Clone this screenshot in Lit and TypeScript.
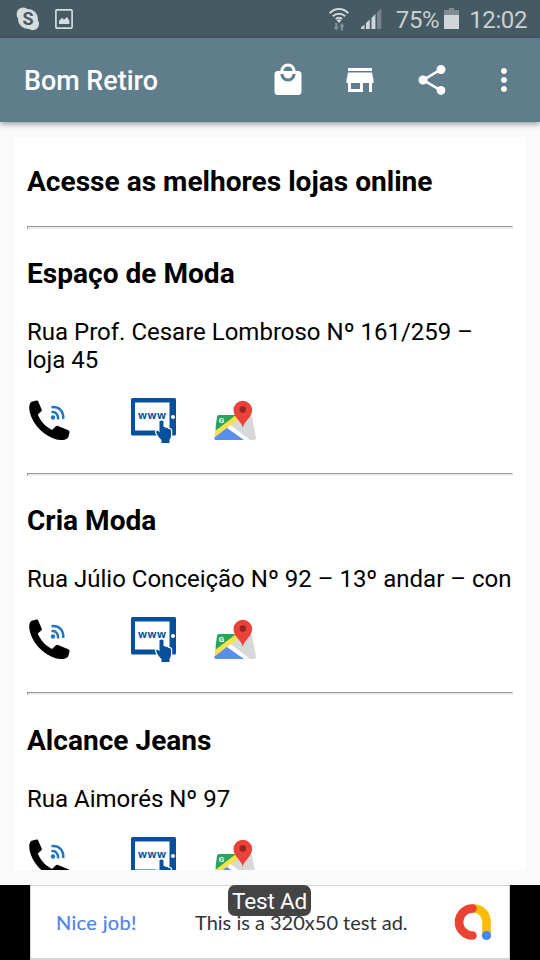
import { LitElement, html, css } from "lit";
import { customElement, property } from "lit/decorators.js";

const icon = (d: string) => html`<svg class="icon" viewBox="0 0 24 24"><path d=${d} /></svg>`;

const MALL = "M19 6h-2c0-2.76-2.24-5-5-5S7 3.24 7 6H5c-1.1 0-1.99.9-1.99 2L3 20c0 1.1.9 2 2 2h14c1.1 0 2-.9 2-2V8c0-1.1-.9-2-2-2zm-7-3c1.66 0 3 1.34 3 3H9c0-1.66 1.34-3 3-3zm0 10c-2.76 0-5-2.24-5-5h2c0 1.66 1.34 3 3 3s3-1.34 3-3h2c0 2.76-2.24 5-5 5z";
const STORE = "M20 4H4v2h16V4zm1 10v-2l-1-5H4l-1 5v2h1v6h10v-6h4v6h2v-6h1zm-9 4H6v-4h6v4z";
const SHARE = "M18 16.08c-.76 0-1.44.3-1.96.77L8.91 12.7c.05-.23.09-.46.09-.7s-.04-.47-.09-.7l7.05-4.11c.54.5 1.25.81 2.04.81 1.66 0 3-1.34 3-3s-1.34-3-3-3-3 1.34-3 3c0 .24.04.47.09.7L8.04 9.81C7.5 9.31 6.79 9 6 9c-1.66 0-3 1.34-3 3s1.34 3 3 3c.79 0 1.5-.31 2.04-.81l7.12 4.16c-.05.21-.08.43-.08.65 0 1.61 1.31 2.92 2.92 2.92s2.92-1.31 2.92-2.92-1.31-2.92-2.92-2.92z";
const MORE = "M12 8c1.1 0 2-.9 2-2s-.9-2-2-2-2 .9-2 2 .9 2 2 2zm0 2c-1.1 0-2 .9-2 2s.9 2 2 2 2-.9 2-2-.9-2-2-2zm0 6c-1.1 0-2 .9-2 2s.9 2 2 2 2-.9 2-2-.9-2-2-2z";

@customElement("status-bar")
export class StatusBar extends LitElement {
  static styles = css`
    :host { display: flex; align-items: center; height: 38px; padding: 0 13px 0 16px; background: #465a64; color: #c9d0d3; font: 24px/38px Roboto, sans-serif; box-sizing: border-box; }
    svg { display: block; flex: none; }
    .skype { margin-right: 15px; }
    .spacer { flex: 1; }
    .wifi { margin: 0 12px 1px 0; }
    .signal { margin: 0 14px 1px 0; }
    .text { padding-top: 2px; white-space: nowrap; letter-spacing: -0.4px; }
    .battery { margin: 0 10px 1px 5px; }
  `;
  render() {
    return html`
      <svg class="skype" width="24" height="24" viewBox="0 0 24 24">
        <circle cx="7.2" cy="7" r="6.6" fill="#d6dbdd" /><circle cx="16.8" cy="17" r="6.2" fill="#d6dbdd" /><circle cx="12" cy="12" r="10" fill="#d6dbdd" />
        <text x="12" y="18.3" text-anchor="middle" font-family="Roboto, sans-serif" font-weight="700" font-size="18" fill="#465a64">S</text>
      </svg>
      <svg width="18" height="20" viewBox="0 0 18 20">
        <rect x=".9" y=".9" width="16.2" height="18.2" rx="1" fill="none" stroke="#d6dbdd" stroke-width="1.7" />
        <path d="M4 15v-3l3-3.2 2 2 3-2.8 2.4 4V15z" fill="#d6dbdd" />
      </svg>
      <div class="spacer"></div>
      <svg class="wifi" width="20" height="24" viewBox="0 0 20 24">
        <g fill="none" stroke="#d0d6d8" stroke-width="2">
          <path d="M.7 6.2C6 .7 14 .7 19.3 6.2M3.8 9.2c3.5-3.4 8.9-3.4 12.4 0M6.8 12.1c1.8-1.7 4.6-1.7 6.4 0" />
        </g>
        <path d="M7.6 13.4L10 12l2.4 1.4L10 16z" fill="#d0d6d8" />
        <path d="M6.2 16h2.200v4h1.400l-2.500 3.600L4.600 20h1.600zM11.800 23.500h2.200v-4h1.500L12.900 15.700 10.400 19.500h1.400z" fill="#81909a" />
      </svg>
      <svg class="signal" width="21" height="21" viewBox="0 0 21 21">
        <path d="M0 21v-1.500L3.500 16.500V21zM5 21v-6l3.800-3.500V21zM10.500 21V10L14.400 6v15z" fill="#d0d6d8" />
        <path d="M16 21V4.500L20.300.5V21z" fill="#77868d" />
      </svg>
      <span class="text">75%</span>
      <svg class="battery" width="15" height="21" viewBox="0 0 15 21">
        <path d="M5 0h5v2h5v5H0V2h5z" fill="#7f8c92" /><path d="M0 7h15v14H0z" fill="#d0d6d8" />
      </svg>
      <span class="text">12:02</span>
    `;
  }
}

@customElement("store-links")
export class StoreLinks extends LitElement {
  static styles = css`
    :host { display: flex; height: 45px; }
    svg { display: block; width: 45px; height: 45px; flex: none; overflow: visible; }
    .web { margin: 0 37px 0 59px; }
  `;
  render() {
    return html`
      <svg viewBox="0 0 45 45">
        <path d="M4.500 3.800L9.600 2.600C10.500 2.500 11 3 11.300 3.700L14.700 11.500C15 12.300 14.800 13 14.200 13.500L10.800 16.500C13.500 23 18.500 28.800 25 31.900L28.900 28.200C29.500 27.600 30.300 27.500 31 27.900L41.300 32.200C42.300 32.700 42.700 33.500 42.500 34.500L41.500 38.500C41 40.200 39.500 41.200 37.500 41.700C32 43 25.500 40.800 20.500 37.600C12.500 32.500 5.500 24.500 3 15C1.800 10 2 5.300 4.500 3.800Z" fill="#000" />
        <g fill="none" stroke="#2175bc" stroke-width="2.500">
          <path d="M24.500 9.200C32 8.300 37 13.500 36.200 21M24.500 14.200C28.800 13.500 31.700 17 31 21.500" />
        </g>
        <circle cx="26" cy="19.500" r="2.200" fill="#2175bc" />
      </svg>
      <svg class="web" viewBox="0 0 45 45">
        <path d="M1.500 0H43.500Q45 0 45 1.500V36Q45 37.500 43.500 37.500H1.500Q0 37.500 0 36V1.500Q0 0 1.500 0Z" fill="#07509a" />
        <path d="M4 4.500H38.500V32.500H4Z" fill="#fff" />
        <circle cx="42" cy="19" r="2" fill="#fff" />
        <path d="M28.500 23.500Q30.500 21.500 32.500 23.500V29Q34 28.600 34.800 30Q36.500 29.400 37.300 30.900Q40 30.600 40 33V38Q39.800 40.300 38.500 41.700V45H30.500V42C28 39.500 26.500 37.500 25.200 34.500C25 32.300 27 32 28.500 34.300Z" fill="#07509a" stroke="#fff" stroke-width="2.400" paint-order="stroke" />
        <text x="7 16.500 26" y="20.800" font-family="Noto Sans, sans-serif" font-size="10.500" font-weight="700" fill="#07509a">www</text>
      </svg>
      <svg viewBox="0 0 45 45">
        <path d="M6 17H37Q38.600 17 39 18.500L43 39.500Q43.300 42 41 42H3Q1 42 1.300 39.800L4 19Q4.400 17 6 17Z" fill="#d8d8d8" />
        <path d="M6 17H26L3 35.500 2.700 29 4 19Q4.400 17 6 17Z" fill="#26a55b" />
        <path d="M23 17H31L14 31 2 40.500 2.800 32.500Z" fill="#fbe04b" />
        <path d="M15 29L33 42H3Q1 42 1.300 39.800Z" fill="#5b8def" />
        <path d="M14 30L17.500 27 37 42H31Z" fill="#fff" />
        <text x="5.700" y="24.500" font-family="Roboto, sans-serif" font-size="8" font-weight="700" fill="#fff">G</text>
        <path d="M29.800 30C29.300 24 20.500 19.500 20.500 12A9.300 9.300 0 0 1 39.100 12C39.100 19.500 30.300 24 29.800 30Z" fill="#ea4238" />
        <circle cx="29.800" cy="11.500" r="3.200" fill="#982522" />
      </svg>
    `;
  }
}

@customElement("store-entry")
export class StoreEntry extends LitElement {
  @property() name = "";
  @property() address = "";
  static styles = css`
    :host { display: block; font-family: Roboto, sans-serif; color: #000; }
    .rule { height: 3px; box-sizing: border-box; border: 1px solid #eee; border-color: #969696 #eee #eee #969696; background: #eee; }
    .name { margin: 28.5px 0 28px; font-size: 28.08px; line-height: 33px; font-weight: 700; white-space: nowrap; }
    .address { margin: 0 0 24px; font-size: 24px; line-height: 28px; }
    store-links { margin-bottom: 29.85px; }
  `;
  render() {
    return html`
      <div class="rule"></div>
      <h3 class="name">${this.name}</h3>
      <p class="address">${this.address}</p>
      <store-links></store-links>
    `;
  }
}

@customElement("test-ad")
export class TestAd extends LitElement {
  static styles = css`
    :host { display: flex; justify-content: center; height: 75px; background: #000; position: relative; }
    .banner { width: 480px; box-sizing: border-box; border: 1px solid #d2d5d7; border-bottom-width: 2px; background: #fff; display: flex; align-items: center; padding: 0 17px 0 25px; font: 20px/24px Lato, sans-serif; white-space: nowrap; }
    .job { width: 139px; color: #4f82ee; letter-spacing: 0.35px; -webkit-text-stroke: 0.2px #4f82ee; }
    .copy { flex: 1; color: #303236; }
    .tag { position: absolute; left: 228px; top: 0; width: 83px; height: 31px; border-radius: 7px; background: #444; color: #fff; font: 22.5px/33px Roboto, sans-serif; letter-spacing: -0.2px; text-align: center; white-space: nowrap; }
  `;
  render() {
    return html`
      <div class="banner">
        <span class="job">Nice job!</span>
        <span class="copy">This is a 320x50 test ad.</span>
        <svg width="38" height="38" viewBox="0 0 38 38" fill="none" stroke-width="8.600" stroke-linecap="round">
          <path d="M19 5.500C27 5.500 32.500 11 32.500 19V32" stroke="#fbbc04" />
          <path d="M18.500 5.500A13.500 13.500 0 0 0 18.500 32.500" stroke="#ea4335" />
          <circle cx="32.500" cy="32.500" r="4.600" fill="#4285f4" />
        </svg>
      </div>
      <div class="tag">Test Ad</div>
    `;
  }
}

@customElement("app-root")
export class AppRoot extends LitElement {
  static styles = css`
    :host { display: flex; flex-direction: column; width: 540px; height: 960px; overflow: hidden; background: #fafafa; font-family: Roboto, sans-serif; }
    .toolbar { height: 84px; flex: none; display: flex; align-items: center; padding-left: 24px; box-sizing: border-box; background: #607d8b; color: #fff; box-shadow: 0 2px 6px rgba(0, 0, 0, .4); }
    .title { flex: 1; padding-top: 2px; font-size: 26.9px; font-weight: 500; white-space: nowrap; }
    .actions { display: flex; gap: 36px; padding-right: 18px; }
    .icon { width: 36px; height: 36px; display: block; fill: #fff; }
    .page { flex: 1; min-height: 0; margin: 15px; padding: 28px 12px 0; background: #fff; overflow: hidden; }
    .intro { margin: 0 0 27.6px; font-size: 28.08px; line-height: 33px; font-weight: 700; white-space: nowrap; }
    status-bar, test-ad { flex: none; }
  `;
  private stores = [
    { name: "Espaço de Moda", address: "Rua Prof. Cesare Lombroso Nº 161/259 – loja 45" },
    { name: "Cria Moda", address: "Rua Júlio Conceição Nº 92 – 13º andar – con" },
    { name: "Alcance Jeans", address: "Rua Aimorés Nº 97" },
  ];
  render() {
    return html`
      <status-bar></status-bar>
      <header class="toolbar">
        <div class="title">Bom Retiro</div>
        <nav class="actions">${[MALL, STORE, SHARE, MORE].map(icon)}</nav>
      </header>
      <main class="page">
        <h3 class="intro">Acesse as melhores lojas online</h3>
        ${this.stores.map((s) => html`<store-entry .name=${s.name} .address=${s.address}></store-entry>`)}
      </main>
      <test-ad></test-ad>
    `;
  }
}
